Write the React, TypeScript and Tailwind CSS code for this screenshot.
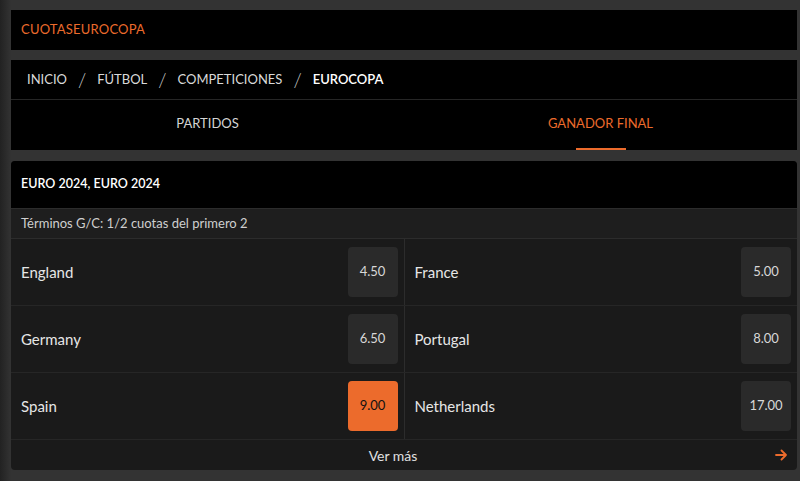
const ODDS = [
  [
    { team: "England", odd: "4.50" },
    { team: "France", odd: "5.00" },
  ],
  [
    { team: "Germany", odd: "6.50" },
    { team: "Portugal", odd: "8.00" },
  ],
  [
    { team: "Spain", odd: "9.00", active: true },
    { team: "Netherlands", odd: "17.00" },
  ],
];

const CRUMBS = ["INICIO", "FÚTBOL", "COMPETICIONES"];

function OddCell({ team, odd, active, first }: { team: string; odd: string; active?: boolean; first?: boolean }) {
  return (
    <div className={`flex flex-1 items-center justify-between pl-[10px] pr-[6px] ${first ? "border-r border-[#2c2c2c]" : ""}`}>
      <span className="text-[15px] text-[#e6e6e6]">{team}</span>
      <button
        className={`flex h-[50px] w-[50px] items-center justify-center rounded-[4px] text-[13px] ${
          active ? "bg-[#ec6b2c] text-[#111]" : "bg-[#2a2a2a] text-[#d8d8d8]"
        }`}
      >
        {odd}
      </button>
    </div>
  );
}

export default function App() {
  return (
    <div className="min-h-[481px] bg-[linear-gradient(to_right,#222_0px,#333_11px)] pl-[11px] pr-[3px] pt-[10px] font-['Lato','Open_Sans',sans-serif]">
      <div className="flex h-[40px] items-center bg-black px-[10px] text-[13px] tracking-[0.2px] text-[#ec6b2c]">CUOTASEUROCOPA</div>

      <div className="mt-[10px] bg-black">
        <div className="flex h-[40px] items-center gap-[11px] border-b border-[#262626] px-[16px] text-[13px] text-[#d9d9d9]">
          {CRUMBS.map((c) => (
            <span key={c} className="flex items-center gap-[11px]">
              {c}
              <span className="text-[19px] font-light leading-none text-[#cfcfcf]">/</span>
            </span>
          ))}
          <span className="font-semibold text-white">EUROCOPA</span>
        </div>
        <div className="flex h-[50px] text-[13px]">
          <div className="flex flex-1 items-center justify-center pb-[2px] text-[#d4d4d4]">PARTIDOS</div>
          <div className="relative flex flex-1 items-center justify-center pb-[2px] text-[#ec6b2c]">
            GANADOR FINAL
            <span className="absolute bottom-0 left-1/2 h-[2px] w-[50px] -translate-x-1/2 bg-[#ec6b2c]" />
          </div>
        </div>
      </div>

      <div className="mt-[11px] overflow-hidden rounded-[4px] bg-[#1a1a1a]">
        <div className="flex h-[48px] items-center border-b border-[#2c2c2c] bg-black px-[10px] text-[12.5px] font-semibold text-white">
          EURO 2024, EURO 2024
        </div>
        <div className="flex h-[30px] items-center border-b border-[#2c2c2c] bg-[#1e1e1e] px-[10px] text-[13px] text-[#cfcfcf]">
          Términos G/C: 1/2 cuotas del primero 2
        </div>
        {ODDS.map((row, i) => (
          <div key={i} className="flex h-[67px] border-b border-[#262626]">
            <OddCell {...row[0]} first />
            <OddCell {...row[1]} />
          </div>
        ))}
        <div className="relative flex h-[30px] items-center justify-center pr-[22px] text-[14px] text-[#e0e0e0]">
          Ver más
          <svg
            className="absolute right-[10px] top-1/2 -translate-y-1/2"
            width="12"
            height="12"
            viewBox="0 0 12 12"
            fill="none"
            stroke="#ec6b2c"
            strokeWidth="1.8"
            strokeLinecap="round"
            strokeLinejoin="round"
          >
            <path d="M1 6h10M6.5 1.5 11 6l-4.5 4.5" />
          </svg>
        </div>
      </div>
    </div>
  );
}
